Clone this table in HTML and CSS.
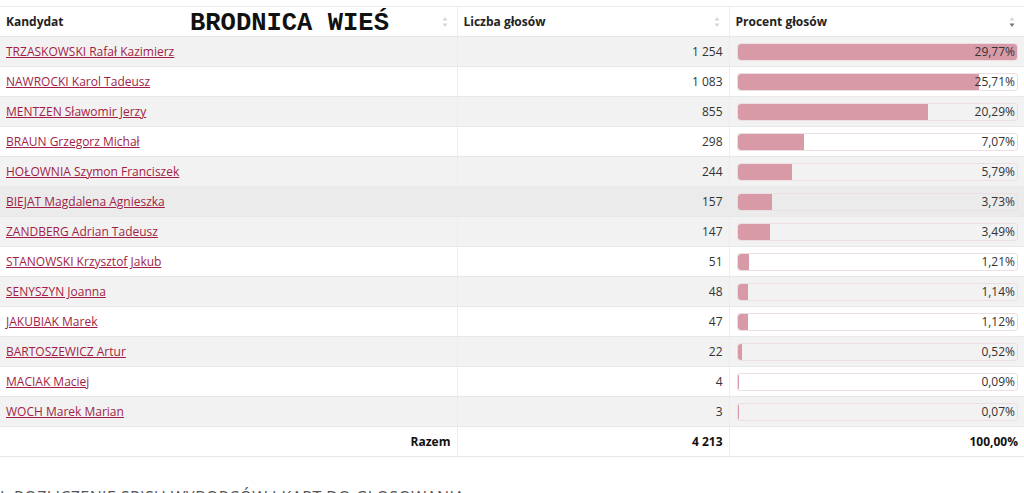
FILE: index.html
```html
<!DOCTYPE html>
<html lang="pl">
<head>
<meta charset="utf-8">
<title>Brodnica Wieś</title>
<link rel="stylesheet" href="styles.css">
</head>
<body>
<table class="results">
  <colgroup>
    <col class="c1">
    <col class="c2">
    <col class="c3">
  </colgroup>
  <thead>
    <tr>
      <th class="th-name">Kandydat<span class="place">BRODNICA WIEŚ</span><svg class="sort" viewBox="0 0 6 12" width="6" height="12"><path d="M3 1 L5.5 4.5 H0.5 Z" fill="#d6d6d6"/><path d="M3 11 L5.5 7.5 H0.5 Z" fill="#d6d6d6"/></svg></th>
      <th>Liczba głosów<svg class="sort" viewBox="0 0 6 12" width="6" height="12"><path d="M3 1 L5.5 4.5 H0.5 Z" fill="#d6d6d6"/><path d="M3 11 L5.5 7.5 H0.5 Z" fill="#d6d6d6"/></svg></th>
      <th>Procent głosów<svg class="sort" viewBox="0 0 6 12" width="6" height="12"><path d="M3 1 L5.5 4.5 H0.5 Z" fill="#d6d6d6"/><path d="M3 11 L5.5 7.5 H0.5 Z" fill="#777"/></svg></th>
    </tr>
  </thead>
  <tbody>
    <tr><td><a href="#">TRZASKOWSKI Rafał Kazimierz</a></td><td class="num">1 254</td><td><div class="bar"><div class="fill full" style="width:100%"></div><span>29,77%</span></div></td></tr>
    <tr><td><a href="#">NAWROCKI Karol Tadeusz</a></td><td class="num">1 083</td><td><div class="bar"><div class="fill" style="width:86.36%"></div><span>25,71%</span></div></td></tr>
    <tr><td><a href="#">MENTZEN Sławomir Jerzy</a></td><td class="num">855</td><td><div class="bar"><div class="fill" style="width:68.18%"></div><span>20,29%</span></div></td></tr>
    <tr><td><a href="#">BRAUN Grzegorz Michał</a></td><td class="num">298</td><td><div class="bar"><div class="fill" style="width:23.76%"></div><span>7,07%</span></div></td></tr>
    <tr><td><a href="#">HOŁOWNIA Szymon Franciszek</a></td><td class="num">244</td><td><div class="bar"><div class="fill" style="width:19.46%"></div><span>5,79%</span></div></td></tr>
    <tr class="hover"><td><a href="#">BIEJAT Magdalena Agnieszka</a></td><td class="num">157</td><td><div class="bar"><div class="fill" style="width:12.52%"></div><span>3,73%</span></div></td></tr>
    <tr><td><a href="#">ZANDBERG Adrian Tadeusz</a></td><td class="num">147</td><td><div class="bar"><div class="fill" style="width:11.72%"></div><span>3,49%</span></div></td></tr>
    <tr><td><a href="#">STANOWSKI Krzysztof Jakub</a></td><td class="num">51</td><td><div class="bar"><div class="fill" style="width:4.07%"></div><span>1,21%</span></div></td></tr>
    <tr><td><a href="#">SENYSZYN Joanna</a></td><td class="num">48</td><td><div class="bar"><div class="fill" style="width:3.83%"></div><span>1,14%</span></div></td></tr>
    <tr><td><a href="#">JAKUBIAK Marek</a></td><td class="num">47</td><td><div class="bar"><div class="fill" style="width:3.75%"></div><span>1,12%</span></div></td></tr>
    <tr><td><a href="#">BARTOSZEWICZ Artur</a></td><td class="num">22</td><td><div class="bar"><div class="fill" style="width:1.75%"></div><span>0,52%</span></div></td></tr>
    <tr><td><a href="#">MACIAK Maciej</a></td><td class="num">4</td><td><div class="bar"><div class="fill" style="width:0.32%"></div><span>0,09%</span></div></td></tr>
    <tr><td><a href="#">WOCH Marek Marian</a></td><td class="num">3</td><td><div class="bar"><div class="fill" style="width:0.24%"></div><span>0,07%</span></div></td></tr>
  </tbody>
  <tfoot>
    <tr><td class="num">Razem</td><td class="num">4 213</td><td class="num">100,00%</td></tr>
  </tfoot>
</table>
<h2 class="section">I. Rozliczenie spisu wyborców i kart do głosowania</h2>
</body>
</html>
```

FILE: styles.css
```css
* { box-sizing: border-box; }
html, body { background: #fff; }
body {
  margin: 0;
  padding-top: 6px;
  font-family: "Open Sans", "Liberation Sans", sans-serif;
  font-size: 12px;
  color: #333;
}
.results {
  width: 1024px;
  border-collapse: collapse;
  table-layout: fixed;
  border-top: 1px solid #ececec;
}
.c1 { width: 457px; }
.c2 { width: 272px; }
.c3 { width: 295px; }
.results th,
.results td {
  height: 30px;
  padding: 0 6px;
  border-bottom: 1px solid #e8e8e8;
  border-left: 1px solid #ececec;
  vertical-align: middle;
  white-space: nowrap;
}
.results th:first-child,
.results td:first-child { border-left: none; }
.results th {
  position: relative;
  text-align: left;
  font-weight: 700;
  color: #222;
  padding-right: 20px;
}
.sort {
  position: absolute;
  right: 9px;
  top: 9px;
}
.place {
  position: absolute;
  left: 190px;
  top: 2px;
  font-family: "Liberation Mono", "Courier New", monospace;
  font-weight: 700;
  font-size: 25.5px;
  color: #111;
  letter-spacing: 0;
}
.results tbody tr:nth-child(odd) { background: #f2f2f2; }
.results tbody tr.hover { background: #ebebeb; }
.results a {
  color: #a21d45;
  text-decoration: underline;
}
.num { text-align: right; }
.results tfoot td { font-weight: 700; color: #111; height: 30px; }
.results tbody td:last-child { padding: 0 6px 0 7px; }
.bar {
  position: relative;
  height: 18px;
  border: 1px solid #ecdfe3;
  border-radius: 3px;
  overflow: hidden;
}
.fill {
  height: 100%;
  background: #d99aa8;
  border-radius: 3px 0 0 3px;
}
.fill.full { border-radius: 3px; }
.bar span {
  position: absolute;
  right: 2px;
  top: 0;
  line-height: 16px;
  color: #333;
}
.section {
  margin: 30px 0 0 0;
  font-size: 16px;
  font-weight: 400;
  color: #555;
  text-transform: uppercase;
  letter-spacing: 0.4px;
  line-height: 20px;
}
```
